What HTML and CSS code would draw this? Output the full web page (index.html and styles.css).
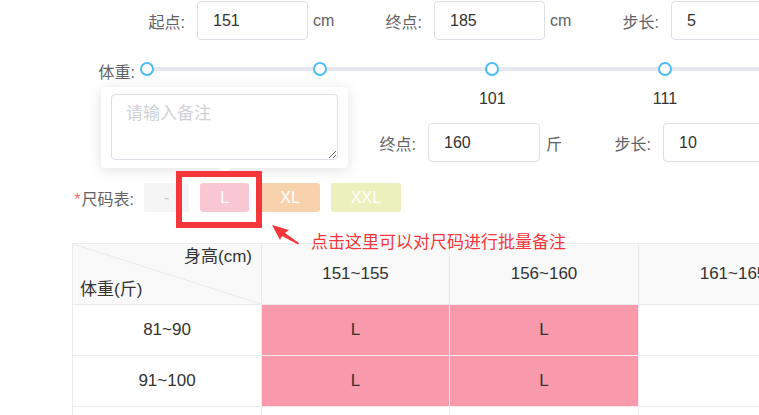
FILE: index.html
```html
<!DOCTYPE html>
<html lang="zh-CN">
<head>
<meta charset="utf-8">
<title>尺码表</title>
<link rel="stylesheet" href="styles.css">
</head>
<body>
<div class="page">
  <div class="fields fields-top">
    <span class="f-label">起点:</span><input class="f-input" value="151"><span class="f-unit">cm</span>
    <span class="f-label">终点:</span><input class="f-input" value="185"><span class="f-unit">cm</span>
    <span class="f-label">步长:</span><input class="f-input" value="5">
  </div>

  <div class="slider">
    <span class="slider-label">体重:</span>
    <div class="track">
      <div class="mark"><span class="knob"></span><span class="mark-val">81</span></div>
      <div class="mark"><span class="knob"></span><span class="mark-val">91</span></div>
      <div class="mark"><span class="knob"></span><span class="mark-val">101</span></div>
      <div class="mark"><span class="knob"></span><span class="mark-val">111</span></div>
    </div>
  </div>

  <div class="fields fields-weight">
    <span class="f-label">起点:</span><input class="f-input" value="81"><span class="f-unit">斤</span>
    <span class="f-label">终点:</span><input class="f-input" value="160"><span class="f-unit">斤</span>
    <span class="f-label">步长:</span><input class="f-input" value="10">
  </div>

  <div class="sizes">
    <span class="sizes-label"><span class="req">*</span>尺码表:</span>
    <div class="tags">
      <span class="tag tag-none">-</span>
      <span class="tag tag-l">L</span>
      <span class="tag tag-xl">XL</span>
      <span class="tag tag-xxl">XXL</span>
    </div>
  </div>

  <div class="grid">
    <div class="cell head corner">
      <span class="corner-top">身高(cm)</span>
      <span class="corner-bottom">体重(斤)</span>
    </div>
    <div class="cell head">151~155</div>
    <div class="cell head">156~160</div>
    <div class="cell head">161~165</div>

    <div class="cell">81~90</div>
    <div class="cell pink">L</div>
    <div class="cell pink">L</div>
    <div class="cell"></div>

    <div class="cell">91~100</div>
    <div class="cell pink">L</div>
    <div class="cell pink">L</div>
    <div class="cell"></div>

    <div class="cell"></div>
    <div class="cell"></div>
    <div class="cell"></div>
    <div class="cell"></div>
  </div>

  <div class="popover">
    <textarea class="remark" placeholder="请输入备注"></textarea>
    <span class="popover-arrow"></span>
  </div>

  <div class="highlight"></div>
  <svg class="pointer" width="40" height="30" viewBox="0 0 40 30">
    <polygon points="4,5 21,10 17,13 31,23 30,24.5 14,16 12,20" fill="#f5363b"/>
  </svg>
  <div class="note">点击这里可以对尺码进行批量备注</div>
</div>
</body>
</html>
```

FILE: styles.css
```css
* { box-sizing: border-box; }

html, body {
  margin: 0;
  padding: 0;
  background: #fff;
}

body {
  width: 759px;
  height: 415px;
  overflow: hidden;
  font-family: "Liberation Sans", "Noto Sans CJK SC", sans-serif;
  font-size: 16px;
  color: #606266;
}

.page {
  position: relative;
  padding-top: 1px;
}

/* form rows */
.fields {
  display: flex;
  align-items: center;
  height: 39px;
  white-space: nowrap;
}

.fields-top { padding-left: 135px; }
.fields-weight { padding-left: 131px; margin-top: 15px; }

.f-label {
  flex: none;
  width: 62px;
  padding-right: 12px;
  text-align: right;
  color: #606266;
}

.f-input {
  flex: none;
  width: 111px;
  height: 39px;
  padding: 0 15px;
  border: 1px solid #dcdfe6;
  border-radius: 4px;
  font: 16px "Liberation Sans", "Noto Sans CJK SC", sans-serif;
  color: #333;
  background: #fff;
  outline: none;
}

.f-unit {
  flex: none;
  width: 64px;
  padding-left: 5px;
  color: #606266;
}

.fields-weight .f-input { width: 112px; }
.fields-weight .f-unit { width: 61px; padding-left: 6px; }

/* slider */
.slider {
  display: flex;
  margin-top: 22px;
}

.slider-label {
  flex: none;
  width: 147px;
  padding-right: 12px;
  text-align: right;
  line-height: 21px;
}

.track {
  flex: 1;
  display: flex;
  gap: 172.67px;
  position: relative;
}

.track::before {
  content: "";
  position: absolute;
  left: 0;
  right: 0;
  top: 5px;
  height: 4px;
  background: #e4e7ed;
}

.mark {
  width: 0;
  display: flex;
  flex-direction: column;
  align-items: center;
  position: relative;
}

.knob {
  flex: none;
  width: 14px;
  height: 14px;
  border: 2px solid #4dbdf5;
  border-radius: 50%;
  background: #fff;
}

.mark-val {
  margin-top: 13px;
  line-height: 19px;
  font-size: 16px;
  color: #333;
  white-space: nowrap;
}

/* sizes */
.sizes {
  display: flex;
  align-items: center;
  margin-top: 21px;
  height: 29px;
}

.sizes-label {
  flex: none;
  width: 144px;
  padding-right: 10px;
  text-align: right;
  color: #606266;
}

.req {
  color: #f56c6c;
  margin-right: 1px;
}

.tags {
  display: flex;
  gap: 11px;
}

.tag {
  display: inline-flex;
  align-items: center;
  height: 29px;
  padding: 0 20px;
  border-radius: 3px;
  color: #fff;
  font-size: 16px;
}

.tag-none { background: #f5f5f6; color: #c6c6c6; }
.tag-l { background: #f9c7d3; }
.tag-xl { background: #f8d2ac; }
.tag-xxl { background: #ecf0bd; }

/* grid table */
.grid {
  display: grid;
  grid-template-columns: 189px 188px 189px 189px;
  grid-template-rows: 61px 51px 51px 51px;
  width: max-content;
  margin-left: 72px;
  margin-top: 31px;
  border-top: 1px solid #ebebeb;
  border-left: 1px solid #ebebeb;
  font-size: 17px;
  color: #333;
}

.cell {
  display: flex;
  align-items: center;
  justify-content: center;
  border-right: 1px solid #ebebeb;
  border-bottom: 1px solid #ebebeb;
  background: #fff;
}

.head {
  background: #f9f9f9;
}

.corner {
  flex-direction: column;
  align-items: stretch;
  justify-content: space-between;
  padding: 3px 9px 4px 7px;
  background:
    linear-gradient(to top right, transparent calc(50% - 0.8px), #e8e8e8 50%, transparent calc(50% + 0.8px)),
    #f9f9f9;
  line-height: 20px;
}

.corner-top { text-align: right; }
.corner-bottom { text-align: left; }

.pink {
  background: #f89aab;
  border-right-color: #fde9ed;
  border-bottom-color: #fde9ed;
}

/* overlays */
.popover {
  position: absolute;
  left: 101px;
  top: 87px;
  width: 247px;
  height: 81px;
  padding: 7px 10px 8px;
  background: #fff;
  border-radius: 4px;
  box-shadow: 0 2px 14px rgba(0, 0, 0, 0.12);
}

.remark {
  display: block;
  width: 227px;
  height: 66px;
  margin: 0;
  padding: 6px 14px 1px;
  border: 1px solid #dcdfe6;
  border-radius: 4px;
  font: 17px/1.5 "Liberation Sans", "Noto Sans CJK SC", sans-serif;
  color: #606266;
  outline: none;
}

.remark::placeholder {
  color: #cfd1d6;
}

.popover-arrow {
  position: absolute;
  left: 118px;
  bottom: -6px;
  width: 0;
  height: 0;
  border-left: 6px solid transparent;
  border-right: 6px solid transparent;
  border-top: 6px solid #fff;
}

.highlight {
  position: absolute;
  left: 176px;
  top: 171px;
  width: 86px;
  height: 57px;
  border: 6px solid #f5363b;
}

.pointer {
  position: absolute;
  left: 268px;
  top: 220px;
}

.note {
  position: absolute;
  left: 311px;
  top: 233px;
  font-size: 17px;
  line-height: 20px;
  color: #f5363b;
  white-space: nowrap;
}
```
